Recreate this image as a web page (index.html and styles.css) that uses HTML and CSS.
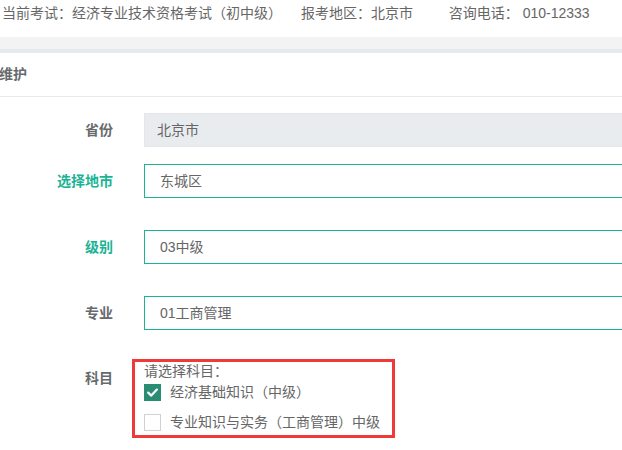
FILE: index.html
```html
<!DOCTYPE html>
<html lang="zh-CN">
<head>
<meta charset="utf-8">
<title>维护</title>
<link rel="stylesheet" href="styles.css">
</head>
<body>
<div class="topbar">
  <span class="info">当前考试：经济专业技术资格考试（初中级）</span>
  <span class="info area">报考地区：北京市</span>
  <span class="info phone">咨询电话： 010-12333</span>
</div>
<div class="band"></div>
<div class="ibox">
  <div class="ibox-title"><h5>维护</h5></div>
  <div class="ibox-content">
    <form class="form">
      <div class="row row-province">
        <label class="label">省份</label>
        <div class="field"><div class="control readonly">北京市</div></div>
      </div>
      <div class="row row-city">
        <label class="label active">选择地市</label>
        <div class="field"><div class="control select">东城区</div></div>
      </div>
      <div class="row row-level">
        <label class="label active">级别</label>
        <div class="field"><div class="control select">03中级</div></div>
      </div>
      <div class="row row-major">
        <label class="label">专业</label>
        <div class="field"><div class="control select">01工商管理</div></div>
      </div>
      <div class="row row-subject">
        <label class="label label-subject">科目</label>
        <div class="subjects">
          <div class="subjects-title">请选择科目：</div>
          <div class="check-item">
            <span class="box checked">
              <svg viewBox="0 0 17 17" width="17" height="17"><path d="M4.2 8.6 L7.3 11.6 L12.9 5.6" fill="none" stroke="#fff" stroke-width="2.2" stroke-linecap="round" stroke-linejoin="round"/></svg>
            </span>
            <span class="check-text">经济基础知识（中级）</span>
          </div>
          <div class="check-item second">
            <span class="box"></span>
            <span class="check-text">专业知识与实务（工商管理）中级</span>
          </div>
        </div>
      </div>
    </form>
  </div>
</div>
</body>
</html>
```
FILE: styles.css
```css
html, body {
  margin: 0;
  padding: 0;
  background: #fff;
  overflow: hidden;
  font-family: "Liberation Sans", "Noto Sans CJK SC", sans-serif;
  color: #666;
}

.topbar {
  height: 37px;
  line-height: 27px;
  font-size: 14px;
  color: #666;
  padding-left: 2px;
  white-space: nowrap;
}

.info { display: inline-block; }
.area { margin-left: 15px; }
.phone { margin-left: 32px; }

.band {
  height: 12px;
  background: #f3f3f4;
}

.ibox {
  border-top: 4px solid #e7eaec;
}

.ibox-title {
  height: 43px;
  border-bottom: 1px solid #e7eaec;
}

.ibox-title h5 {
  margin: 0 0 0 -1px;
  font-size: 14px;
  line-height: 43px;
  font-weight: 700;
  color: #676a6c;
}

.ibox-content {
  padding-top: 16px;
}

.form {
  display: flex;
  flex-direction: column;
}

.row {
  display: flex;
  align-items: flex-start;
  gap: 31px;
}

.row-province { margin-bottom: 17px; }
.row-city { margin-bottom: 32px; }
.row-level { margin-bottom: 32px; }
.row-major { margin-bottom: 29px; }

.label {
  flex: none;
  width: 113px;
  text-align: right;
  font-size: 14px;
  font-weight: 700;
  line-height: 34px;
  height: 34px;
  color: #676a6c;
}

.label.active { color: #1ab394; }

.label-subject {
  line-height: 20px;
  height: 20px;
  padding-top: 9px;
}

.field {
  flex: 1;
  margin-right: -20px;
}

.control {
  box-sizing: border-box;
  height: 34px;
  line-height: 32px;
  font-size: 14px;
  color: #666;
  border: 1px solid #1ab394;
  padding-left: 15px;
}

.control.readonly {
  background: #e9ecef;
  border-color: #e5e6e7;
  padding-left: 12px;
}

.subjects {
  flex: none;
  margin-left: -12px;
  border: 3px solid #f03a3a;
  padding: 0 12px 4px 9px;
  font-size: 14px;
  color: #666;
}

.subjects-title {
  line-height: 18px;
  height: 18px;
}

.check-item {
  display: flex;
  align-items: center;
  gap: 9px;
  margin-top: 4px;
  height: 17px;
  line-height: 17px;
}

.check-item.second { margin-top: 13px; }

.box {
  flex: none;
  box-sizing: border-box;
  width: 17px;
  height: 17px;
  border: 1px solid #d2d2d2;
  background: #fff;
  display: flex;
}

.box.checked {
  background: #2a8c73;
  border-color: #2a8c73;
}

.box svg { display: block; margin: -1px; }

.check-text { white-space: nowrap; }
```
